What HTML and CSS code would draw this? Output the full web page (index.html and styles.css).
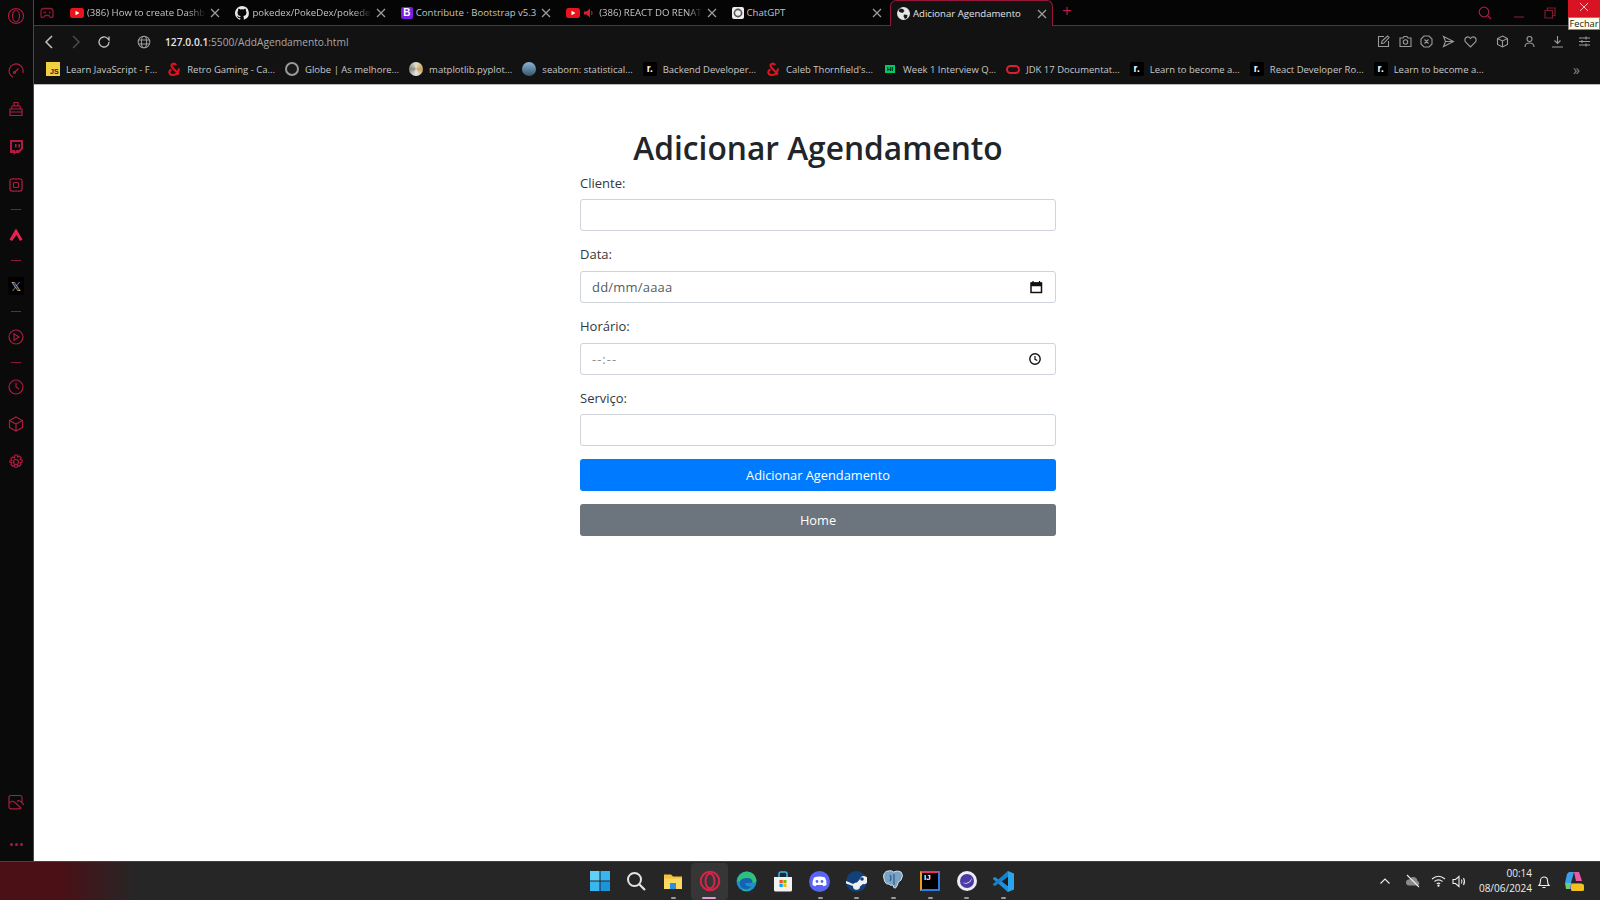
FILE: index.html
```html
<!DOCTYPE html>
<html lang="pt-BR">
<head>
    <meta charset="UTF-8">
    <meta name="viewport" content="width=device-width, initial-scale=1.0">
    <title>Adicionar Agendamento</title>
    <link rel="stylesheet" href="styles.css">
</head>
<body>
    <svg class="defs" width="0" height="0">
        <symbol id="x" viewBox="0 0 12 12"><path d="M2 2l8 8M10 2l-8 8"/></symbol>
        <symbol id="yt" viewBox="0 0 14 10"><rect width="14" height="10" rx="2.5" fill="#e8141c" stroke="none"/><path d="M5.5 2.8v4.4L9.4 5z" fill="#fff" stroke="none"/></symbol>
        <symbol id="amp" viewBox="0 0 14 14"><path d="M9 3.2C8 1 4.5 1.300 4.500 3.800c0 1.500 1.500 2.500 3.500 4.500l4 4M12 6.500C11.500 11 8.500 13 5.500 13 2 13 1 9 4.500 7.500" fill="none" stroke="#d8141e" stroke-width="2.200"/></symbol>
    </svg>

    <div class="screen">
        <div class="browser">
            <aside class="sidebar">
                <div class="side-slot side-logo"><svg width="18" height="18" viewBox="0 0 18 18"><circle cx="9" cy="9" r="7.500"/><ellipse cx="9" cy="9" rx="3.500" ry="6"/></svg></div>
                <div class="side-slot s-speed"><svg width="16" height="16" viewBox="0 0 16 16"><path d="M5 14.200A7 7 0 1 1 14.800 10M6.500 9.500L10.500 5.500"/><circle cx="6.500" cy="9.500" r="1"/></svg></div>
                <div class="side-slot"><svg width="16" height="16" viewBox="0 0 16 16"><path d="M2 8h12v6.500H2zM3.500 8l.5-3h8l.5 3M6 5V1.500h4V5M2 11h12"/></svg></div>
                <div class="side-slot"><svg width="16" height="16" viewBox="0 0 16 16"><path class="solid" d="M2 1h13v9l-4 4H8l-2.500 2v-2H2zM4 3v8h3v1.500L8.500 11H11l2-2V3z" fill-rule="evenodd"/><path class="solid" d="M7 5h1.500v3.500H7zM10.500 5H12v3.500h-1.500z"/></svg></div>
                <div class="side-slot"><svg width="16" height="16" viewBox="0 0 16 16"><rect x="2" y="2" width="12" height="12" rx="2"/><rect x="5.500" y="5.500" width="5" height="5" rx="1"/><path d="M1 5h1M1 8h1M1 11h1M14 5h1M14 8h1M14 11h1M5 1v1M8 1v1M11 1v1M5 14v1M8 14v1M11 14v1"/></svg></div>
                <div class="side-line"></div>
                <div class="side-slot s-split"><svg width="16" height="16" viewBox="0 0 16 16"><path class="bright" d="M8 1.500l6.500 11-2.500 1.500L8.500 8 4 14l-2.500-1.500z"/></svg></div>
                <div class="side-line"></div>
                <div class="side-slot s-split"><span class="x-box">𝕏</span></div>
                <div class="side-line"></div>
                <div class="side-slot s-split"><svg width="16" height="16" viewBox="0 0 16 16"><circle cx="8" cy="8" r="7"/><path d="M6 4.800v6.400L11 8z"/></svg></div>
                <div class="side-line"></div>
                <div class="side-slot s-clock"><svg width="16" height="16" viewBox="0 0 16 16"><circle cx="8" cy="8" r="7"/><path d="M8 3.800V8l3 2"/></svg></div>
                <div class="side-slot s-box"><svg width="16" height="16" viewBox="0 0 16 16"><path d="M8 1l6.500 3.500v7L8 15l-6.500-3.500v-7zM1.500 4.500L8 8l6.500-3.500M8 8v7"/></svg></div>
                <div class="side-slot s-gear"><svg width="16" height="16" viewBox="0 0 16 16"><circle cx="8" cy="8" r="2.500"/><path d="M6.800 1h2.400l.4 2 1.700-1 1.800 1.700-1 1.800 2 .4v2.400l-2 .4 1 1.800-1.800 1.700-1.700-1-.4 2H6.800l-.4-2-1.700 1-1.800-1.700 1-1.800-2-.4V6.900l2-.4-1-1.800 1.800-1.700 1.700 1z"/></svg></div>
                <div class="side-spacer"></div>
                <div class="side-slot s-gallery"><svg width="16" height="16" viewBox="0 0 16 16"><path d="M1 13V3.500Q1 1.500 3 1.500h9q2 0 2 2V9M1 9.500q3-4 6-1l6 5.500q-1 .8-2 .8H3q-2 0-2-2zM9 7.500q2-2.500 5.500 2L16 11"/></svg></div>
                <div class="side-dots"><span></span><span></span><span></span></div>
            </aside>

            <div class="main">
                <div class="tabstrip">
                    <div class="game-icon"><svg width="14" height="12" viewBox="0 0 14 12"><path d="M3.500 1.500h7Q13 1.500 13 5v3.500q0 2-1.800 2-1.200 0-2.200-2H5q-1 2-2.200 2Q1 10.500 1 8.500V5q0-3.500 2.500-3.500z"/><path d="M3.500 5.500h2.500M9 5.500h1.500"/></svg></div>
                    <div class="tab">
                        <svg class="fav" width="14" height="10"><use href="#yt"/></svg>
                        <span class="tab-title">(386) How to create Dashb</span>
                        <svg class="tab-x" width="12" height="12"><use href="#x"/></svg>
                    </div>
                    <div class="tab">
                        <svg class="fav" width="14" height="14" viewBox="0 0 16 16"><path class="gh" d="M8 0a8 8 0 0 0-2.500 15.600c.4.100.5-.2.500-.4v-1.400c-2.200.5-2.700-1-2.700-1-.4-.9-.9-1.200-.9-1.200-.7-.5.100-.5.100-.5.800.100 1.200.8 1.200.8.700 1.200 1.900.9 2.300.7.100-.5.300-.9.500-1.100-1.800-.2-3.600-.9-3.600-4 0-.9.300-1.600.8-2.100-.1-.2-.4-1 .1-2.100 0 0 .7-.2 2.200.8a7.600 7.600 0 0 1 4 0c1.500-1 2.200-.8 2.200-.8.400 1.100.2 1.900.1 2.100.5.600.8 1.300.8 2.100 0 3.100-1.900 3.700-3.700 3.900.3.300.6.800.6 1.500v2.200c0 .2.100.5.600.4A8 8 0 0 0 8 0z"/></svg>
                        <span class="tab-title">pokedex/PokeDex/pokede</span>
                        <svg class="tab-x" width="12" height="12"><use href="#x"/></svg>
                    </div>
                    <div class="tab">
                        <span class="fav fav-b">B</span>
                        <span class="tab-title tab-full">Contribute · Bootstrap v5.3</span>
                        <svg class="tab-x" width="12" height="12"><use href="#x"/></svg>
                    </div>
                    <div class="tab">
                        <svg class="fav" width="14" height="10"><use href="#yt"/></svg>
                        <svg class="tab-sound" width="10" height="10" viewBox="0 0 10 10"><path d="M0 3.500h2.500L6 .5v9L2.500 6.500H0z" fill="#d8202c"/><path d="M7.500 3q1.200 2 0 4" stroke="#d8202c" fill="none"/></svg>
                        <span class="tab-title">(386) REACT DO RENAT</span>
                        <svg class="tab-x" width="12" height="12"><use href="#x"/></svg>
                    </div>
                    <div class="tab">
                        <span class="fav fav-gpt"><svg width="10" height="10" viewBox="0 0 10 10"><circle cx="5" cy="5" r="3.600" fill="none" stroke="#555" stroke-width="1.600"/></svg></span>
                        <span class="tab-title tab-full">ChatGPT</span>
                        <svg class="tab-x" width="12" height="12"><use href="#x"/></svg>
                    </div>
                    <div class="tab tab-active">
                        <svg class="fav" width="13" height="13" viewBox="0 0 13 13"><circle cx="6.500" cy="6.500" r="6.500" fill="#e6e6e6"/><path d="M3 1.500l3 .5 1.500 2-2 2-3-1-1-1.500zM7 7.500l3.500.5-.5 3-2 1-1.500-2.500z" fill="#1a1a1a"/></svg>
                        <span class="tab-title tab-full">Adicionar Agendamento</span>
                        <svg class="tab-x" width="12" height="12"><use href="#x"/></svg>
                    </div>
                    <div class="tab-new">+</div>
                    <div class="win-controls">
                        <svg class="win-icon win-search" width="14" height="14" viewBox="0 0 14 14"><circle cx="6" cy="6" r="4.800"/><path d="M9.500 9.500l3.500 3.500"/></svg>
                        <svg class="win-icon win-min" width="12" height="12" viewBox="0 0 12 12"><path d="M1 10h10"/></svg>
                        <svg class="win-icon win-max" width="12" height="12" viewBox="0 0 12 12"><path d="M1 3.500h7.500V11H1zM3.500 3.500V1H11v7.500H8.500"/></svg>
                        <div class="win-close"><svg width="12" height="12"><use href="#x"/></svg></div>
                    </div>
                    <div class="tooltip">Fechar</div>
                </div>

                <div class="toolbar">
                    <svg class="tool nav-back" width="12" height="14" viewBox="0 0 12 14"><path d="M9 1L3 7l6 6"/></svg>
                    <svg class="tool nav-fwd" width="12" height="14" viewBox="0 0 12 14"><path d="M3 1l6 6-6 6"/></svg>
                    <svg class="tool nav-reload" width="14" height="14" viewBox="0 0 14 14"><path d="M12 7a5 5 0 1 1-1.500-3.600L12 5V1.500"/></svg>
                    <svg class="tool nav-globe" width="14" height="14" viewBox="0 0 14 14"><circle cx="7" cy="7" r="5.800"/><ellipse cx="7" cy="7" rx="2.600" ry="5.800"/><path d="M1.200 5h11.600M1.200 9h11.600"/></svg>
                    <div class="url"><b>127.0.0.1</b>:5500/AddAgendamento.html</div>
                    <div class="tool-right">
                        <svg class="tool" width="13" height="13" viewBox="0 0 13 13"><path d="M7 1.500H1.500v10h10V6M4.500 8.500L5 6l5.500-5 1.500 1.500L7 8z"/></svg>
                        <svg class="tool" width="13" height="13" viewBox="0 0 13 13"><path d="M1 3h3l1-1.500h3L9 3h3v8.500H1z"/><circle cx="6.500" cy="7" r="2.200"/></svg>
                        <svg class="tool" width="13" height="13" viewBox="0 0 13 13"><path d="M4 1h5l3 3v5l-3 3H4L1 9V4zM4.500 4.500l4 4M8.500 4.500l-4 4"/></svg>
                        <svg class="tool" width="13" height="13" viewBox="0 0 13 13"><path d="M1.500 1.500l10 5-10 5 2-5zM3.500 6.500h8"/></svg>
                        <svg class="tool" width="13" height="13" viewBox="0 0 13 13"><path d="M6.500 12L1.500 7Q0 4.500 2 2.500q2.500-1.500 4.500 1Q8.500 1 11 2.500q2 2 .5 4.500z"/></svg>
                        <svg class="tool gap-wide" width="13" height="13" viewBox="0 0 13 13"><path d="M6.500 1l5 2.500v6L6.500 12l-5-2.500v-6zM1.500 3.500l5 2.500 5-2.500M6.500 6v6"/></svg>
                        <svg class="tool gap-mid" width="13" height="13" viewBox="0 0 13 13"><circle cx="6.500" cy="4" r="2.500"/><path d="M2 12q0-4 4.500-4t4.500 4"/></svg>
                        <svg class="tool gap-mid" width="13" height="13" viewBox="0 0 13 13"><path d="M6.500 1v7.500M3.500 5.500l3 3 3-3M1 12h11"/></svg>
                        <svg class="tool gap-mid" width="13" height="13" viewBox="0 0 13 13"><path d="M1 3h11M1 6.500h11M1 10h11M8 1.500v3M4 5v3M8 8.500v3"/></svg>
                    </div>
                </div>

                <div class="bookmarks">
                    <div class="bm"><span class="ico ico-js">JS</span>Learn JavaScript - F...</div>
                    <div class="bm"><svg class="ico" width="14" height="14"><use href="#amp"/></svg>Retro Gaming - Ca...</div>
                    <div class="bm"><span class="ico ico-globe"></span>Globe | As melhore...</div>
                    <div class="bm"><span class="ico ico-mpl"></span>matplotlib.pyplot...</div>
                    <div class="bm"><span class="ico ico-sea"></span>seaborn: statistical...</div>
                    <div class="bm"><span class="ico ico-r">r.</span>Backend Developer...</div>
                    <div class="bm"><svg class="ico" width="14" height="14"><use href="#amp"/></svg>Caleb Thornfield's...</div>
                    <div class="bm"><span class="ico ico-hi">HI</span>Week 1 Interview Q...</div>
                    <div class="bm"><span class="ico ico-oracle"></span>JDK 17 Documentat...</div>
                    <div class="bm"><span class="ico ico-r">r.</span>Learn to become a...</div>
                    <div class="bm"><span class="ico ico-r">r.</span>React Developer Ro...</div>
                    <div class="bm"><span class="ico ico-r">r.</span>Learn to become a...</div>
                    <div class="bm-more">»</div>
                </div>

                <main class="page">
                    <div class="container">
                        <h1>Adicionar Agendamento</h1>
                        <form>
                            <div class="form-group">
                                <label for="cliente">Cliente:</label>
                                <input class="form-control" type="text" id="cliente">
                            </div>
                            <div class="form-group">
                                <label for="data">Data:</label>
                                <div class="field">
                                    <input class="form-control form-date" type="text" id="data" placeholder="dd/mm/aaaa">
                                    <svg class="field-icon" width="14" height="14" viewBox="0 0 14 14"><path d="M2 3h10.500v9.500H2zM2 5.500h10.500" fill="none" stroke="#111" stroke-width="1.500"/><path d="M2 2.500h10.500v3H2z" fill="#111"/><path d="M4 1v2M10.500 1v2" stroke="#111" stroke-width="1.300"/></svg>
                                </div>
                            </div>
                            <div class="form-group">
                                <label for="horario">Horário:</label>
                                <div class="field">
                                    <input class="form-control form-time" type="text" id="horario" placeholder="--:--">
                                    <svg class="field-icon icon-clock" width="14" height="14" viewBox="0 0 14 14"><circle cx="7" cy="7" r="5.200" fill="none" stroke="#111" stroke-width="1.400"/><path d="M7 4v3.300l2.300 1.300" fill="none" stroke="#111" stroke-width="1.200"/></svg>
                                </div>
                            </div>
                            <div class="form-group form-group-last">
                                <label for="servico">Serviço:</label>
                                <input class="form-control" type="text" id="servico">
                            </div>
                            <button type="button" class="btn btn-primary">Adicionar Agendamento</button>
                            <a class="btn btn-secondary" href="#">Home</a>
                        </form>
                    </div>
                </main>
            </div>
        </div>

        <footer class="taskbar">
            <div></div>
            <div class="task-apps">
                <div class="app"><svg width="20" height="20" viewBox="0 0 20 20"><path d="M0 0h9.500v9.500H0z" fill="#5fd0f8"/><path d="M10.500 0H20v9.500h-9.500z" fill="#38b6f0"/><path d="M0 10.500h9.500V20H0z" fill="#38b6f0"/><path d="M10.500 10.500H20V20h-9.500z" fill="#1c94dc"/></svg></div>
                <div class="app"><svg width="20" height="20" viewBox="0 0 20 20"><circle cx="8.500" cy="8.500" r="6.500" fill="none" stroke="#e4e4e4" stroke-width="2"/><path d="M13 13l6 6" stroke="#e4e4e4" stroke-width="2.200"/></svg></div>
                <div class="app app-open"><svg width="20" height="20" viewBox="0 0 20 20"><path d="M1 3.500h7l2 2h9V17H1z" fill="#f4c23c"/><path d="M1 7.500h18V18H1z" fill="#fbd860"/><path d="M7 12h6v6H7z" fill="#2a8fdc"/></svg></div>
                <div class="app app-active"><svg width="22" height="22" viewBox="0 0 22 22"><circle cx="11" cy="11" r="9.300" fill="none" stroke="#d8244a" stroke-width="2"/><ellipse cx="11" cy="11" rx="4.500" ry="7.500" fill="none" stroke="#d8244a" stroke-width="2"/></svg></div>
                <div class="app"><svg width="21" height="21" viewBox="0 0 21 21"><circle cx="10.500" cy="10.500" r="10" fill="#1b8fd0"/><path d="M1 10Q3 1 11 .5q8 .5 9.500 8.500 0 3-4 3H9q1 4 7 3.500-3 4.500-7.500 4.500C4 19 8 12 4 10.500z" fill="#2fc07a"/><path d="M4 10q2-3 7-3 6 0 5.500 5H9q1 4 7 3.500-5 5-9.500 2Q3 15 4 10z" fill="#1463b4"/></svg></div>
                <div class="app"><svg width="20" height="21" viewBox="0 0 20 21"><path d="M1 6h18v13q0 1.500-1.500 1.500h-15Q1 20.500 1 19z" fill="#f2f2f2"/><path d="M6 6V3q0-2 2-2h4q2 0 2 2v3" fill="none" stroke="#38b6f0" stroke-width="1.500"/><path d="M6.500 9h3.200v3.200H6.500z" fill="#f25022"/><path d="M10.300 9h3.200v3.200h-3.200z" fill="#7fba00"/><path d="M6.500 12.800h3.200V16H6.500z" fill="#00a4ef"/><path d="M10.300 12.800h3.200V16h-3.200z" fill="#ffb900"/></svg></div>
                <div class="app app-open"><svg width="21" height="21" viewBox="0 0 21 21"><circle cx="10.500" cy="10.500" r="10.500" fill="#5865f2"/><path d="M5 6.500q5.500-2 11 0 2 3.500 1.500 7.500-1.500 1-3 1.300l-1-1.300H7.500l-1 1.300q-1.500-.3-3-1.300Q3 10 5 6.500z" fill="#fff"/><circle cx="8" cy="10.500" r="1.400" fill="#5865f2"/><circle cx="13" cy="10.500" r="1.400" fill="#5865f2"/></svg></div>
                <div class="app app-open"><svg width="21" height="21" viewBox="0 0 21 21"><circle cx="10.500" cy="10.500" r="10.500" fill="#12407a"/><path d="M0 10q4 1.500 7 3 2-2 4-1.500L14 8a4 4 0 1 1 3 5l-3 2.500a3.500 3.500 0 0 1-7-.5L0 12.500z" fill="#f0f0f0"/><circle cx="16" cy="8" r="1.800" fill="#12407a"/></svg></div>
                <div class="app app-open"><svg width="21" height="22" viewBox="0 0 21 22"><path d="M5 1q4-1 5.500 1 4-2 7.500 0 3 3 0 8-1.500 2-2.500 1.500-1 5-3 6.500-2 1-2.500-3-3 1-4-1-3 1-4.500-3-2-6 0-8 1.500-2 3.500-2z" fill="#7aa3c4" stroke="#cfe0ee" stroke-width="1"/><path d="M11 4v11M7 5q2 3 0 6" fill="none" stroke="#2f5f88" stroke-width="1.200"/></svg></div>
                <div class="app app-open"><span class="ij">IJ</span></div>
                <div class="app app-open"><svg width="20" height="20" viewBox="0 0 20 20"><circle cx="10" cy="10" r="10" fill="#efeaf8"/><circle cx="10" cy="10" r="7" fill="#4a3aa6"/><path d="M5 9a5.500 5.500 0 0 0 10.500-1A6 6 0 0 1 5 9z" fill="#efeaf8" transform="rotate(-20 10 10)"/></svg></div>
                <div class="app app-open"><svg width="21" height="21" viewBox="0 0 21 21"><path d="M15 0l6 2.500v16L15 21 5 11.500z" fill="#2aa4ec"/><path d="M15 5.500V15.500L8.500 10.500 15 5.500z" fill="#1c1c1c"/><path d="M0 7l2-1 13 9.500V21L0 8z" fill="#1f8fd8"/><path d="M0 14l2 1L15 5.500V0L0 13z" fill="#1680c8"/></svg></div>
            </div>
            <div class="tray">
                <svg class="tray-icon tray-chev" width="12" height="8" viewBox="0 0 12 8"><path d="M1.500 6.500L6 2l4.500 4.500"/></svg>
                <svg class="tray-icon tray-cloud" width="16" height="14" viewBox="0 0 16 14"><path d="M4 11.500a3 3 0 0 1 0-6 4.500 4.500 0 0 1 8.500 1.500 2.300 2.300 0 0 1 0 4.500z" fill="#8a8a8a" stroke="none"/><path d="M2 1l12 12"/></svg>
                <svg class="tray-icon tray-wifi" width="15" height="12" viewBox="0 0 15 12"><path d="M1 4q6.500-5.500 13 0M3.500 6.500q4-3.200 8 0M5.800 8.800q1.700-1.400 3.400 0"/><circle cx="7.500" cy="10.700" r=".6"/></svg>
                <svg class="tray-icon tray-sound" width="15" height="13" viewBox="0 0 15 13"><path d="M1 4.500h2.500L7 1.500v10l-3.500-3H1zM9.500 4.500q1 2 0 4M11.500 3q2 3.500 0 7"/></svg>
                <div class="clock"><span>00:14</span><span>08/06/2024</span></div>
                <svg class="tray-icon tray-bell" width="14" height="15" viewBox="0 0 14 15"><path d="M2 11.500q1.500-1.500 1.500-5a3.500 3.500 0 0 1 7 0q0 3.500 1.500 5zM5.500 13.500h3"/></svg>
                <svg class="copilot" width="21" height="21" viewBox="0 0 21 21"><path d="M6 1h5L8 12H2L4 3z" fill="#3aa0e8"/><path d="M11 1h5l3 9h-6z" fill="#e85aa8"/><path d="M2 12h7l-2 6H3z" fill="#6ad06a"/><path d="M8 12h11l-3 6H7z" fill="#8a5ae8"/><rect x="8" y="13" width="13" height="7" rx="1.500" fill="#f4c020"/></svg>
            </div>
        </footer>
    </div>
</body>
</html>
```

FILE: styles.css
```css
* { box-sizing: border-box; }
html, body { margin: 0; height: 100%; overflow: hidden; }
body { font-family: "Open Sans", "Noto Sans", sans-serif; background: #fff; color: #212529; }
.defs { position: absolute; }
.screen { display: flex; flex-direction: column; height: 900px; }
.browser { display: flex; flex: 1; min-height: 0; }
svg { fill: none; stroke: currentColor; flex: none; }

/* sidebar */
.sidebar { width: 34px; flex: none; background: #0a0a0a; border-right: 1px solid #a81a3c; color: #b01c40; display: flex; flex-direction: column; align-items: center; padding-top: 7px; padding-right: 1px; }
.sidebar svg { stroke-width: 1.150; }
.side-slot { height: 38px; display: flex; align-items: center; justify-content: center; width: 100%; flex: none; }
.side-logo { height: 18px; margin-bottom: 27px; }
.side-line { width: 10px; height: 1px; background: #8a1a36; margin: 5px 0; flex: none; }
.s-split { height: 40px; }
.s-clock { height: 37px; }
.s-box { height: 38px; }
.s-gear { height: 38px; }
.side-spacer { flex: 1; }
.s-gallery { height: 20px; margin-bottom: 31px; }
.side-dots { display: flex; gap: 2px; margin-bottom: 15px; }
.side-dots span { width: 3px; height: 3px; border-radius: 50%; background: #a81c3e; }
.solid { fill: currentColor; stroke: none; }
.bright { fill: #e8224e; stroke: none; }
.x-box { width: 16px; height: 18px; background: #000; color: #ccc; font: 13px "DejaVu Sans", sans-serif; display: flex; align-items: center; justify-content: center; }

.main { flex: 1; min-width: 0; display: flex; flex-direction: column; }

/* tabs */
.tabstrip { height: 26px; flex: none; background: #050505; border-bottom: 1px solid #96163a; display: flex; align-items: stretch; position: relative; padding-left: 6px; font-size: 9.600px; color: #c4c4c4; }
.game-icon { width: 26px; flex: none; display: flex; align-items: center; color: #8c1c34; stroke-width: 1.300; }
.tab { width: 165.400px; flex: none; display: flex; align-items: center; padding: 0 10px 0 4px; gap: 3px; white-space: nowrap; }
.tab-active { width: 163px; margin-bottom: -1px; margin-left: -3px; background: #121212; border: 1px solid #96163a; border-bottom: none; border-radius: 6px 6px 0 0; padding: 0 4px 0 6px; color: #e2e2e2; }
.tab-title { flex: 1; min-width: 0; overflow: hidden; -webkit-mask-image: linear-gradient(to right, #000 85%, transparent 100%); mask-image: linear-gradient(to right, #000 85%, transparent 100%); }
.tab-full { -webkit-mask-image: none; mask-image: none; }
.tab-x { color: #9c9c9c; stroke-width: 1.300; }
.fav { flex: none; stroke: none; }
.gh { fill: #e8e8e8; stroke: none; }
.fav-b { width: 12px; height: 12px; background: #7a1fe0; color: #fff; font: bold 10px/12px "Liberation Sans", sans-serif; text-align: center; border-radius: 2px; }
.fav-gpt { width: 12px; height: 12px; background: #eee; border-radius: 2px; display: flex; align-items: center; justify-content: center; }
.tab-sound { margin: 0 2px 0 1px; stroke: none; }
.tab-new { width: 22px; margin-left: 3px; color: #c01c40; font-size: 17px; line-height: 22px; text-align: center; }
.win-controls { margin-left: auto; display: flex; align-items: center; color: #a81c3e; height: 25px; }
.win-icon { margin-right: 19px; stroke-width: 1.200; }
.win-search { margin-right: 21px; }
.win-min { color: #7c1a30; }
.win-max { margin-right: 12px; color: #7c1a30; }
.win-close { width: 32px; height: 25px; background: #d81424; color: #f0c8c8; display: flex; justify-content: center; padding-top: 1px; }
.tooltip { position: absolute; right: 0; top: 17px; width: 32px; height: 13px; background: #fffde8; border: 1px solid #888; color: #222; font-size: 9.200px; line-height: 11px; text-align: center; z-index: 2; white-space: nowrap; }

/* toolbar */
.toolbar { height: 31px; flex: none; background: #121212; display: flex; align-items: center; color: #aaa; font-size: 10.200px; }
.tool { color: #9a9a9a; stroke-width: 1.100; }
.nav-back { margin-left: 9px; color: #c4c4c4; stroke-width: 1.500; }
.nav-fwd { margin-left: 15px; color: #4a4a4a; stroke-width: 1.500; }
.nav-reload { margin-left: 15px; color: #c0c0c0; stroke-width: 1.300; }
.nav-globe { margin-left: 26px; }
.url { margin-left: 14px; color: #a8a8a8; }
.url b { color: #e8e8e8; font-weight: 600; }
.tool-right { margin-left: auto; display: flex; align-items: center; gap: 8.700px; padding-right: 9px; }
.gap-wide { margin-left: 10px; }
.gap-mid { margin-left: 5.800px; }

/* bookmarks */
.bookmarks { height: 28px; flex: none; background: #121212; border-bottom: 1px solid #b8b8b8; display: flex; align-items: center; padding: 0 0 3px 12px; color: #c8c8c8; font-size: 9.500px; white-space: nowrap; gap: 10px; }
.bm { display: flex; align-items: center; gap: 6px; }
.ico { flex: none; width: 14px; height: 14px; display: block; stroke: none; }
.ico-js { background: #f0d040; color: #222; font: bold 7px/9px "Liberation Sans", sans-serif; padding: 5px 0 0 4px; }
.ico-globe { border-radius: 50%; background: #181818; border: 2px solid #999; }
.ico-mpl { border-radius: 50%; background: conic-gradient(#e8e0c8, #c8a060, #e8e8e8, #888, #e8e0c8); }
.ico-sea { border-radius: 50%; background: linear-gradient(#8cb4d4, #34566e); }
.ico-r { background: #000; color: #fff; font: bold 10px/13px "Liberation Sans", sans-serif; text-align: center; border-radius: 2px; }
.ico-hi { width: 10px; height: 8px; background: #0c6; color: #000; font: bold 6px/8px "Liberation Sans", sans-serif; text-align: center; margin: 0 2px; }
.ico-oracle { height: 9px; border: 2px solid #d82030; border-radius: 5px; }
.bm-more { margin-left: auto; padding-right: 20px; color: #888; font-size: 14px; }

/* page */
.page { flex: 1; background: #fff; padding: 43px 0 0 2px; }
.container { width: 476px; margin: 0 auto; }
h1 { margin: 0 0 5.500px; font-size: 31.700px; line-height: 40px; font-weight: 600; text-align: center; color: #212529; }
.form-group { margin-bottom: 14.300px; }
.form-group-last { margin-bottom: 12.700px; }
label { display: block; height: 18px; line-height: 18px; margin-bottom: 7.500px; font-size: 13px; color: #33383d; }
.field { position: relative; }
.form-control { display: block; width: 100%; height: 32px; padding: 0 11px; border: 1px solid #ced4da; border-radius: 3px; background: #fff; font: inherit; font-size: 13px; color: #495057; outline: none; }
.form-control::placeholder { color: #555b61; opacity: 1; }
.form-date { letter-spacing: .2px; }
.form-time { letter-spacing: 1px; }
.form-time::placeholder { color: #8a9096; }
.field-icon { position: absolute; right: 13px; top: 9px; stroke: none; }
.icon-clock { right: 14px; }
.btn { display: block; width: 100%; height: 32px; padding: 0; border: none; border-radius: 3px; font: inherit; font-size: 12.800px; line-height: 32px; text-align: center; color: #fff; text-decoration: none; }
.btn-primary { background: #007bff; margin-bottom: 13px; }
.btn-secondary { background: #6c757d; }

/* taskbar */
.taskbar { height: 39px; flex: none; display: grid; grid-template-columns: 1fr auto 1fr; align-items: center; background: linear-gradient(to right, #4a1016 0, #4a1016 60px, #262626 135px); border-top: 1px solid #4a4040; }
.task-apps { display: flex; align-items: center; margin-left: 3px; }
.app { width: 36.700px; height: 37px; display: flex; align-items: center; justify-content: center; position: relative; }
.app svg { stroke: none; }
.app-open::after { content: ""; position: absolute; bottom: 1px; left: 16px; width: 5px; height: 2px; border-radius: 1px; background: #999; }
.app-active { background: #363636; border-radius: 4px; }
.app-active::after { content: ""; position: absolute; bottom: 1px; left: 11px; width: 14px; height: 2px; border-radius: 1px; background: #e09ad8; }
.ij { width: 20px; height: 20px; background: #000; border: 2px solid; border-color: #e8326c #2a7ae8 #2a7ae8 #e8a020; color: #fff; font: bold 8px/10px "Liberation Sans", sans-serif; padding-left: 2px; }
.tray { display: flex; align-items: center; justify-content: flex-end; color: #eee; }
.tray-icon { stroke-width: 1.100; }
.tray-chev { margin-right: 13.500px; }
.tray-cloud { margin-right: 10px; }
.tray-wifi { margin-right: 6.500px; }
.tray-sound { margin-right: 9.500px; }
.tray-bell { margin-right: 4px; }
.clock { display: flex; flex-direction: column; align-items: flex-end; font-size: 10px; line-height: 15px; margin: 0 5px 0 2px; }
.copilot { margin: 0 16px 0 8px; stroke: none; }
```
